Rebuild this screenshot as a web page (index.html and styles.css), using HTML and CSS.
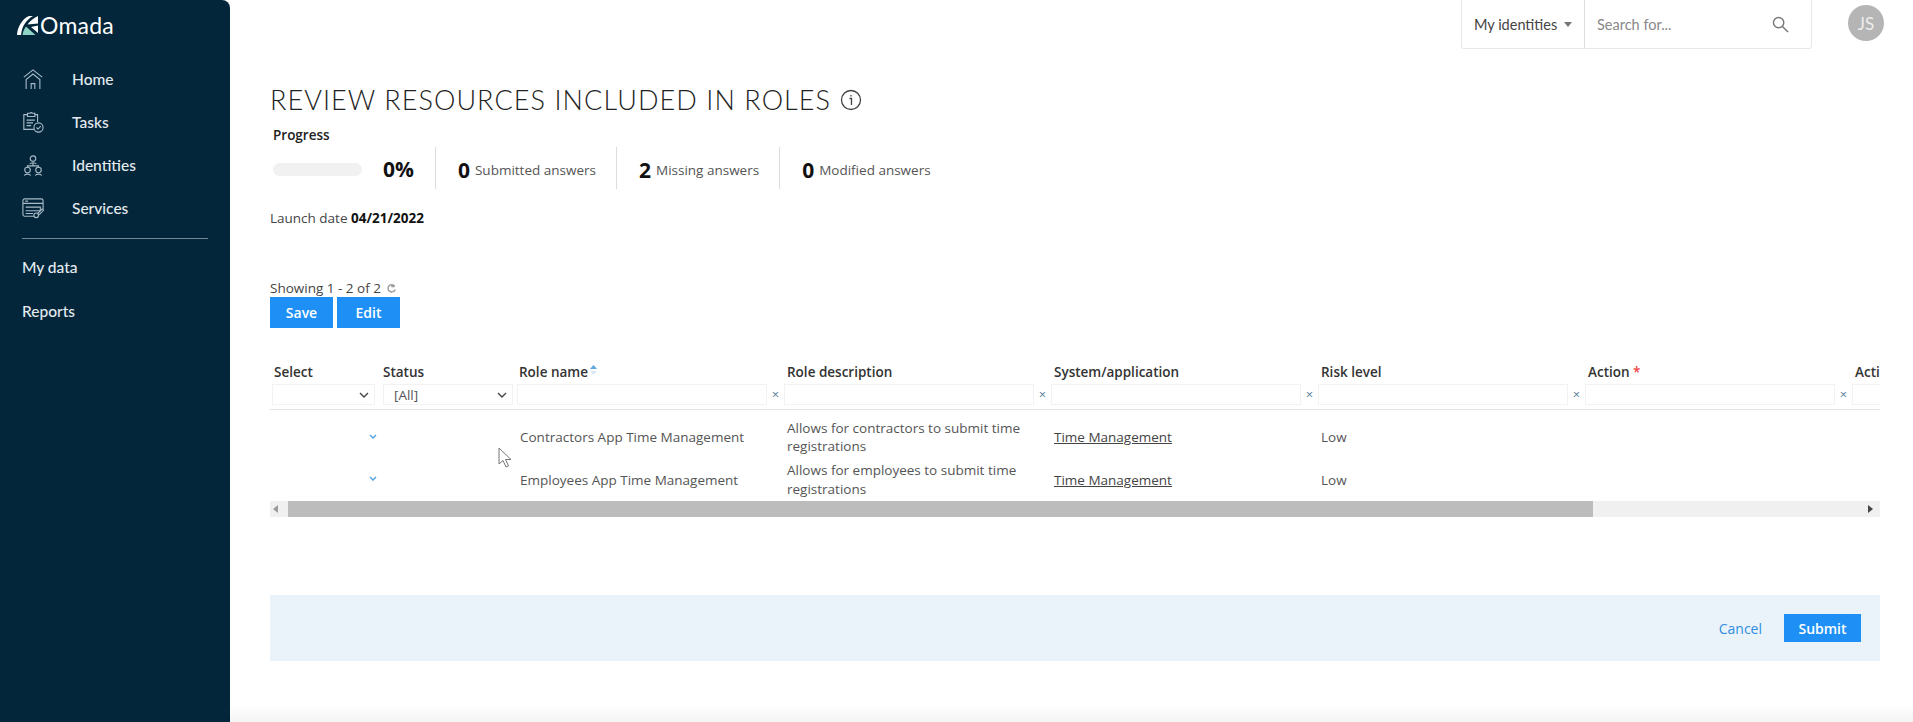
FILE: index.html
```html
<!DOCTYPE html>
<html lang="en">
<head>
<meta charset="utf-8">
<title>Review resources included in roles</title>
<link rel="stylesheet" href="styles.css">
</head>
<body>
<div class="app">
  <aside class="sidebar">
    <div class="brand">
      <svg class="brand-mark" viewBox="0 0 22 19"><path d="M0 19C.5 11 5 3 12 0h4C9 4 5 10 4 19z" fill="#fff"/><path d="M9 10.500L18.500 19H5.500C6 15.500 7 13 9 10.500z" fill="#8fd3c4"/><path d="M21 0v7.500L10.500 8.500C13 5 16.500 2 21 0z" fill="#fff"/><path d="M14 11l7-1.500V17z" fill="#fff"/></svg>
      <span class="brand-name">Omada</span>
    </div>
    <nav class="nav-main">
      <a class="nav-item"><svg class="nav-icon" viewBox="0 0 24 24"><path d="M2 10L12 2l10 8M4.500 23V12.500L12 6.500l7.500 6V23M10 23v-6h4v6"/></svg><span>Home</span></a>
      <a class="nav-item"><svg class="nav-icon" viewBox="0 0 24 24"><path d="M13 20H2V4h4M14 4h3v8M6 2.500h2.500a2 2 0 0 1 3 0H14V6H6zM5 10h9M5 13h7M5 16h5"/><circle cx="18" cy="18" r="5"/><path d="M15.800 18l1.700 1.700 3-3.200"/></svg><span>Tasks</span></a>
      <a class="nav-item"><svg class="nav-icon" viewBox="0 0 24 24"><circle cx="12" cy="5" r="3"/><path d="M8.500 11c1-2 6-2 7 0M12 10v3M6 14.500V13h12v1.500"/><circle cx="6" cy="17.500" r="3"/><path d="M2.500 23.500c1-2 6-2 7 0"/><circle cx="18" cy="17.500" r="3"/><path d="M14.500 23.500c1-2 6-2 7 0"/></svg><span>Identities</span></a>
      <a class="nav-item"><svg class="nav-icon" viewBox="0 0 24 24"><path d="M13 21H3a2 2 0 0 1-2-2V4a2 2 0 0 1 2-2h18a2 2 0 0 1 2 2v10M1 7h22M3.500 4.500h3M4 11h16v4H4M4 18h8"/><circle cx="15.500" cy="20" r="2.500"/><path d="M17 18l5-5 1.500 1.500-5 5"/></svg><span>Services</span></a>
    </nav>
    <hr class="nav-rule">
    <nav class="nav-sub">
      <a class="nav-link">My data</a>
      <a class="nav-link">Reports</a>
    </nav>
  </aside>

  <div class="page">
    <header class="topbar">
      <div class="searchbox">
        <div class="scope">My identities<span class="caret"></span></div>
        <div class="search">
          <span class="search-text">Search for...</span>
          <svg class="search-icon" viewBox="0 0 18 18"><circle cx="7" cy="7" r="5.500"/><path d="M11 11l6 6"/></svg>
        </div>
      </div>
      <div class="avatar">JS</div>
    </header>

    <main class="content">
      <h1 class="title">REVIEW RESOURCES INCLUDED IN ROLES
        <svg class="info" viewBox="0 0 22 22"><circle cx="11" cy="11" r="9.500"/><path d="M9.500 9.500H11.500V16M11 6v1.500"/></svg>
      </h1>
      <div class="progress-label">Progress</div>
      <div class="stats">
        <div class="stat stat-first"><div class="bar"></div><b class="pct">0%</b></div>
        <div class="stat"><b class="num">0</b> Submitted answers</div>
        <div class="stat"><b class="num">2</b> Missing answers</div>
        <div class="stat"><b class="num">0</b> Modified answers</div>
      </div>
      <div class="launch">Launch date <b>04/21/2022</b></div>
      <div class="showing">Showing 1 - 2 of 2
        <svg class="refresh" viewBox="0 0 12 12"><path d="M9.500 3.500A4 4 0 1 0 10 7M6.500 1v3h3"/></svg>
      </div>
      <div class="actions">
        <button class="btn">Save</button>
        <button class="btn">Edit</button>
      </div>

      <div class="grid-wrap">
        <div class="grid-row grid-head">
          <div>Select</div>
          <div>Status</div>
          <div class="sortable">Role name<svg class="sort" viewBox="0 0 7 10"><path class="sort-up" d="M3.500 0L7 4H0z"/><path class="sort-down" d="M3.500 10L7 6H0z"/></svg></div>
          <div>Role description</div>
          <div>System/application</div>
          <div>Risk level</div>
          <div>Action <span class="req">*</span></div>
          <div>Acti</div>
        </div>
        <div class="grid-row grid-filter">
          <div class="flt flt-select"><svg class="chev" viewBox="0 0 10 6"><path d="M1 1l4 4 4-4"/></svg></div>
          <div class="flt flt-select flt-status"><span>[All]</span><svg class="chev" viewBox="0 0 10 6"><path d="M1 1l4 4 4-4"/></svg></div>
          <div class="flt-cell"><div class="flt"></div><span class="clear">×</span></div>
          <div class="flt-cell"><div class="flt"></div><span class="clear">×</span></div>
          <div class="flt-cell"><div class="flt"></div><span class="clear">×</span></div>
          <div class="flt-cell"><div class="flt"></div><span class="clear">×</span></div>
          <div class="flt-cell"><div class="flt"></div><span class="clear">×</span></div>
          <div class="flt-cell"><div class="flt"></div></div>
        </div>
        <div class="grid-body">
          <div class="grid-row grid-data">
            <div class="cell-chev"><svg class="row-chev" viewBox="0 0 8 5"><path d="M1 1l3 3 3-3"/></svg></div>
            <div></div>
            <div>Contractors App Time Management</div>
            <div>Allows for contractors to submit time registrations</div>
            <div><a class="link">Time Management</a></div>
            <div>Low</div>
            <div></div>
            <div></div>
          </div>
          <div class="grid-row grid-data">
            <div class="cell-chev"><svg class="row-chev" viewBox="0 0 8 5"><path d="M1 1l3 3 3-3"/></svg></div>
            <div></div>
            <div>Employees App Time Management</div>
            <div>Allows for employees to submit time registrations</div>
            <div><a class="link">Time Management</a></div>
            <div>Low</div>
            <div></div>
            <div></div>
          </div>
        </div>
        <svg class="pointer" viewBox="0 0 14 21"><path d="M1 1v16l4-3.500 3 6.500 2.500-1.200-3-6.300H13z"/></svg>
      </div>
      <div class="hscroll">
        <span class="arrow arrow-left"></span>
        <div class="thumb"></div>
        <span class="arrow arrow-right"></span>
      </div>

      <footer class="form-foot">
        <a class="cancel">Cancel</a>
        <button class="btn btn-submit">Submit</button>
      </footer>
    </main>
  </div>
</div>
</body>
</html>
```
FILE: styles.css
```css
* { box-sizing: border-box; }
html, body { margin: 0; height: 100%; }
body {
  font-family: "Open Sans", "Liberation Sans", sans-serif;
  color: #333;
  background: #fff;
  overflow: hidden;
}
.app { display: flex; height: 722px; background: linear-gradient(to bottom, #fff 0, #fff 705px, #f4f4f4 722px); }

.sidebar {
  width: 230px;
  flex: none;
  background: #03263b;
  border-top-right-radius: 8px;
  color: #e4ebef;
  font-family: Lato, "Liberation Sans", sans-serif;
  font-size: 15.500px;
  font-weight: 500;
}
.brand { display: flex; align-items: center; height: 50px; padding-left: 17px; }
.brand-mark { width: 22px; height: 19px; margin-right: 1px; }
.brand-name { font-size: 23px; font-weight: 400; color: #fff; line-height: 1; letter-spacing: 0.2px; }
.nav-main { display: flex; flex-direction: column; margin-top: 7px; }
.nav-item { display: flex; align-items: center; height: 43px; padding-left: 22px; }
.nav-icon { width: 22px; height: 22px; margin-right: 28px; fill: none; stroke: #a9bcc8; stroke-width: 1.200; }
.nav-rule { border: 0; border-top: 1px solid #6f8796; margin: 9px 22px 6px; }
.nav-sub { display: flex; flex-direction: column; }
.nav-link { height: 44px; display: flex; align-items: center; padding-left: 22px; }

.page { flex: 1; min-width: 0; display: flex; flex-direction: column; }
.topbar { display: flex; justify-content: flex-end; align-items: flex-start; height: 49px; }
.searchbox {
  display: flex;
  width: 351px;
  height: 49px;
  border: 1px solid #e8e8e8;
  border-top: 0;
  border-radius: 0 0 3px 3px;
  font-family: Lato, "Liberation Sans", sans-serif;
  font-size: 14.500px;
}
.scope { width: 123px; display: flex; align-items: center; padding-left: 12px; border-right: 1px solid #ddd; color: #444; }
.caret { border: 4px solid transparent; border-top: 5px solid #777; border-bottom: 0; margin-left: 7px; }
.search { flex: 1; display: flex; align-items: center; justify-content: space-between; padding: 0 22px 0 12px; color: #888; }
.search-icon { width: 17px; height: 17px; fill: none; stroke: #777; stroke-width: 1.500; }
.avatar {
  width: 36px; height: 36px; margin: 5px 29px 0 36px;
  border-radius: 50%;
  background: #b5b5b5;
  color: #eee;
  font-family: Lato, "Liberation Sans", sans-serif;
  font-size: 17px;
  display: flex; align-items: center; justify-content: center;
}

.content { padding: 0 33px 0 40px; }
.title {
  margin: 31px 0 0;
  height: 38px;
  display: flex; align-items: center; gap: 9px;
  font-family: Lato, "Liberation Sans", sans-serif;
  font-weight: 300;
  font-size: 27px;
  letter-spacing: 1.080px;
  color: #222;
  white-space: nowrap;
}
.info { width: 22px; height: 22px; fill: none; stroke: #444; stroke-width: 1.300; margin-top: 2px; }
.progress-label { margin: 7px 0 0 3px; height: 20px; line-height: 20px; font-size: 13.500px; font-weight: 600; color: #222; }
.stats { display: flex; align-items: stretch; height: 42px; margin-top: 2px; font-size: 13.500px; color: #555; }
.stat { display: flex; align-items: center; gap: 5px; padding: 4px 20px 0 22px; border-right: 1px solid #ddd; }
.stat:last-child { border-right: 0; }
.stat-first { padding: 2px 21px 0 3px; gap: 21px; }
.bar { width: 89px; height: 13px; border-radius: 7px; background: #f1f1f1; }
.pct, .num { font-size: 21px; color: #111; font-weight: 700; }
.launch { margin-top: 19px; height: 20px; line-height: 20px; font-size: 13.500px; color: #444; }
.launch b { color: #111; font-weight: 700; }
.showing { margin-top: 50px; height: 20px; line-height: 20px; font-size: 13.500px; color: #444; display: flex; align-items: center; gap: 5px; }
.refresh { width: 11px; height: 11px; fill: none; stroke: #999; stroke-width: 1.500; }
.actions { display: flex; gap: 4px; margin-top: -1px; }
.btn {
  width: 63px; height: 31px;
  border: 0; padding: 0;
  background: #1e90f5;
  color: #fff;
  font-family: inherit;
  font-size: 14px;
  font-weight: 600;
}

.grid-wrap { position: relative; margin-top: 34px; height: 141px; overflow: hidden; }
.grid-row {
  display: grid;
  grid-template-columns: 109px 137px repeat(5, 267px) 30px;
  white-space: nowrap;
}
.grid-head { height: 20px; line-height: 20px; font-size: 13.500px; font-weight: 600; color: #333; margin-bottom: 2px; }
.grid-head > div { padding-left: 4px; }
.grid-head > .sortable { padding-left: 3px; }
.sortable { display: flex; align-items: center; gap: 2px; }
.sort { width: 7px; height: 10px; margin-top: -5px; }
.sort-up { fill: #5ba7e0; }
.sort-down { fill: #d7e8f4; }
.req { color: #f04444; }
.grid-filter { height: 26px; }
.flt {
  height: 21px;
  border: 1px solid #f2f2f2;
  display: flex; align-items: center; justify-content: space-between;
  font-size: 13.500px;
  color: #555;
  flex: none;
  width: 250px;
}
.flt-select { width: 103px; margin-left: 2px; padding: 0 5px 0 10px; justify-content: flex-end; }
.flt-status { width: 130px; margin-left: 4px; justify-content: space-between; }
.chev { width: 10px; height: 6px; fill: none; stroke: #444; stroke-width: 1.400; }
.flt-cell { display: flex; align-items: center; height: 21px; padding-left: 1px; }
.clear { width: 17px; flex: none; text-align: center; color: #5d7f9c; font-size: 13px; line-height: 21px; }
.grid-body { border-top: 1px solid #e3e3e3; padding-top: 6px; margin-top: -1px; }
.grid-data { height: 42.500px; align-items: center; font-size: 13.500px; line-height: 18.500px; color: #555; }
.grid-data > div { padding-left: 4px; white-space: normal; padding-right: 20px; }
.grid-data > .cell-chev { padding: 0 0 2px 99px; }
.row-chev { display: block; width: 8px; height: 5px; fill: none; stroke: #5ba7e0; stroke-width: 1.500; }
.link { color: #444; text-decoration: underline; }
.pointer { position: absolute; left: 228px; top: 85px; width: 14px; height: 21px; fill: #fff; stroke: #777; stroke-width: 1; }

.hscroll { display: flex; align-items: center; height: 16px; background: #f0f0f0; margin-top: -2px; position: relative; }
.thumb { position: absolute; left: 18px; width: 1305px; top: 0; bottom: 0; background: #bcbcbc; }
.arrow { border: 4px solid transparent; position: absolute; top: 4px; }
.arrow-left { left: 3px; border-right: 5px solid #999; border-left: 0; }
.arrow-right { right: 7px; border-left: 5px solid #444; border-right: 0; }

.form-foot {
  display: flex; align-items: center; justify-content: flex-end; gap: 22px;
  height: 66px;
  margin-top: 78px;
  padding-right: 19px;
  background: #ebf3fa;
}
.cancel { color: #2f8fe0; font-size: 14px; font-weight: 500; }
.btn-submit { width: 77px; height: 28px; }
```
